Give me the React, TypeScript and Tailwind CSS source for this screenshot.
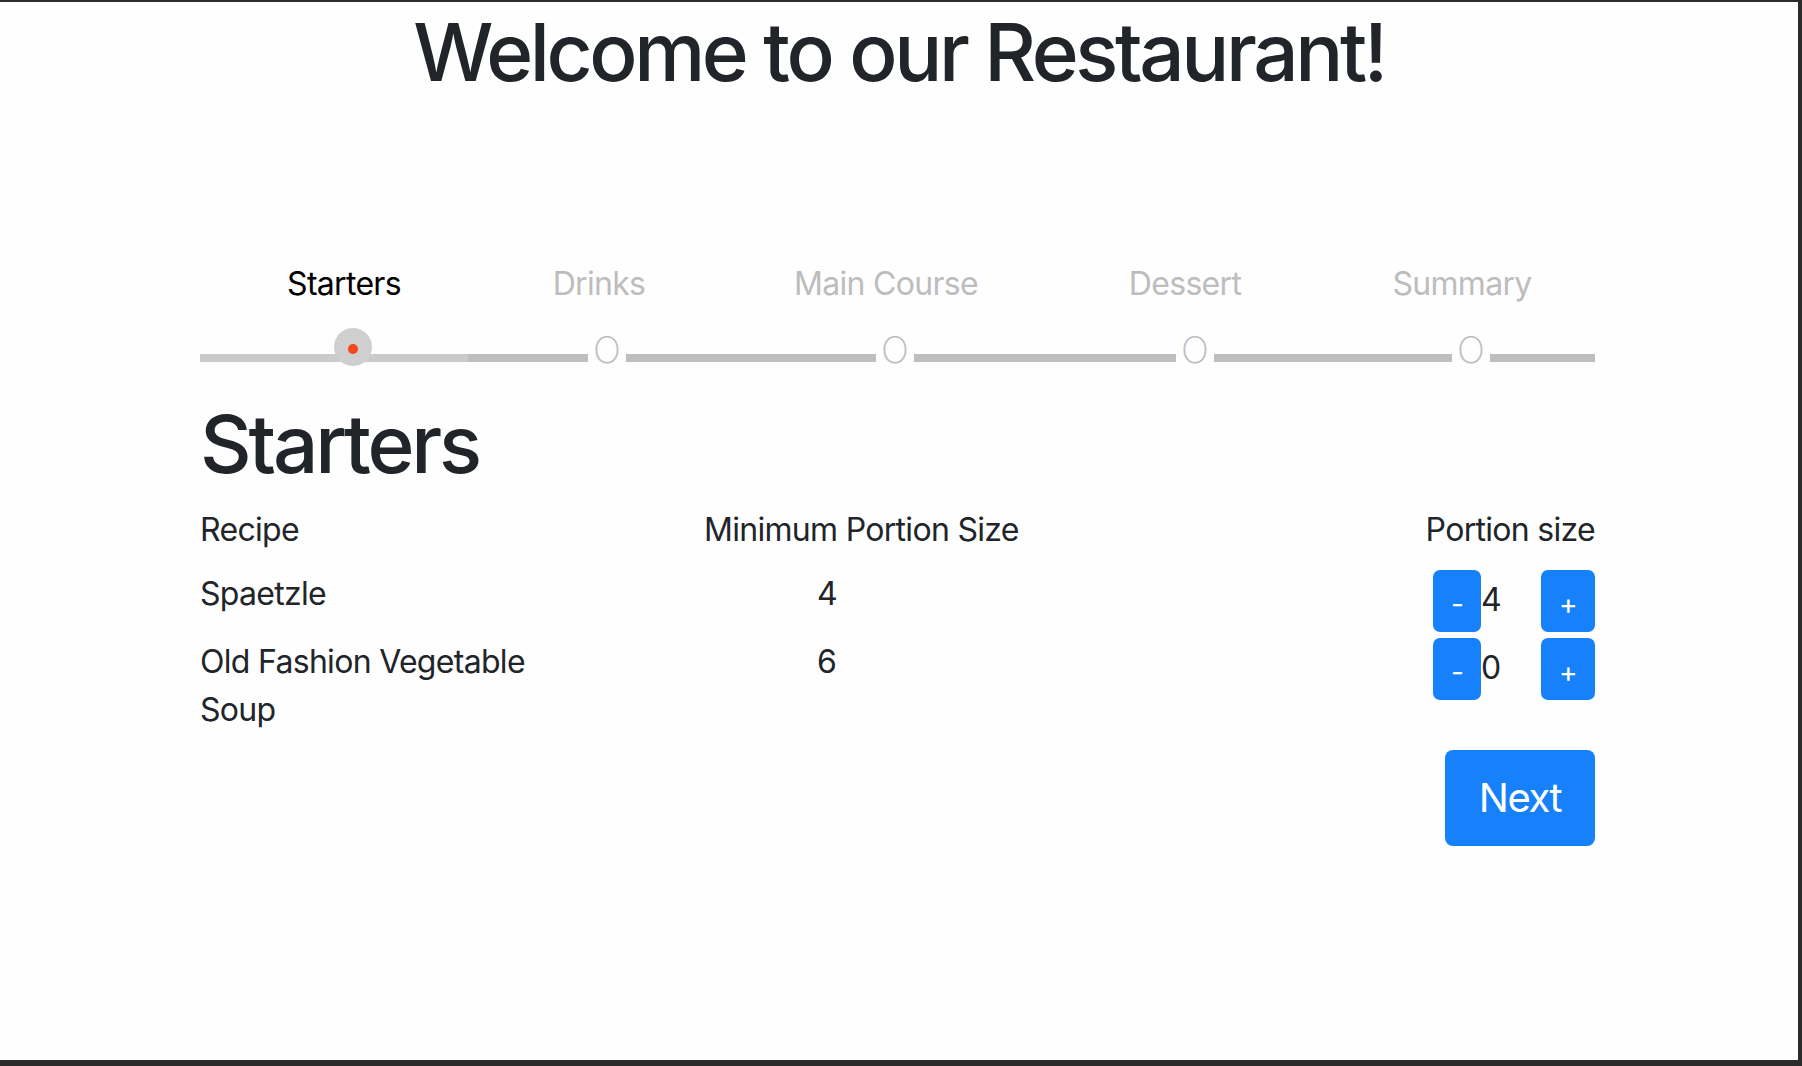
import { useState } from 'react'

const STEPS = [
  { label: 'Starters', cell: 'w-[288px]', active: true },
  { label: 'Drinks', cell: 'w-[222px]', active: false },
  { label: 'Main Course', cell: 'w-[352px]', active: false },
  { label: 'Dessert', cell: 'w-[246px]', active: false },
  { label: 'Summary', cell: 'w-[308px]', active: false },
]

const STARTERS = [
  { id: 1, name: 'Spaetzle', min: 4, initial: 4 },
  { id: 2, name: 'Old Fashion Vegetable Soup', min: 6, initial: 0 },
]

function StepMarker() {
  return (
    <div className="flex h-[40px] w-[38px] items-center justify-center text-[37px] font-extralight leading-none text-[#bdbdbd]">
      <span className="mt-[2px]">O</span>
    </div>
  )
}

function Stepper() {
  return (
    <div className="w-[1395px]">
      {/* labels */}
      <div className="flex h-[48px] items-center">
        {STEPS.map((s) => (
          <div
            key={s.label}
            className={`${s.cell} shrink-0 text-center text-[32px] leading-[48px] tracking-[-0.7px] ${s.active ? 'text-black' : 'text-[#bdbdbd]'}`}
          >
            {s.label}
          </div>
        ))}
      </div>

      {/* track */}
      <div className="mt-[20px] flex h-[40px] items-start">
        <div className="relative mt-[26px] h-[8px] w-[268px] bg-[#cbcbcb]">
          <div className="absolute left-[134px] top-[-26px] flex h-[38px] w-[38px] items-center justify-center rounded-full bg-[#cfcfcf]">
            <div className="mt-[3px] h-[10px] w-[10px] rounded-full bg-[#f5461a]" />
          </div>
        </div>
        <div className="mt-[26px] h-[8px] w-[120px] bg-[#bebebe]" />
        <StepMarker />
        <div className="mt-[26px] h-[8px] w-[250px] bg-[#bebebe]" />
        <StepMarker />
        <div className="mt-[26px] h-[8px] w-[262px] bg-[#bebebe]" />
        <StepMarker />
        <div className="mt-[26px] h-[8px] w-[238px] bg-[#bebebe]" />
        <StepMarker />
        <div className="mt-[26px] h-[8px] w-[105px] bg-[#bebebe]" />
      </div>
    </div>
  )
}

function PortionControl({ value, onChange }: { value: number; onChange: (v: number) => void }) {
  return (
    <div className="flex items-start">
      <button
        onClick={() => onChange(Math.max(0, value - 1))}
        className="flex h-[62px] w-[48px] items-center justify-center rounded-[7px] bg-[#1681fb] pt-[6px] text-[28px] text-white"
      >
        -
      </button>
      <div className="w-[60px] pt-[6px] text-[32px] leading-[48px]">{value}</div>
      <button
        onClick={() => onChange(value + 1)}
        className="flex h-[62px] w-[54px] items-center justify-center rounded-[7px] bg-[#1681fb] pt-[6px] text-[28px] text-white"
      >
        +
      </button>
    </div>
  )
}

export default function App() {
  const [portions, setPortions] = useState<Record<number, number>>(
    Object.fromEntries(STARTERS.map((s) => [s.id, s.initial]))
  )

  return (
    <div className="h-[1066px] w-[1802px] bg-[#2b2b2b] pt-[2px] pr-[4px] pb-[6px]" style={{ fontFamily: 'Inter, "Noto Sans", sans-serif' }}>
      <div className="h-full w-full bg-[#fefefe] text-[#212529]">
        <h1 className="pt-[2px] text-center text-[80px] font-medium leading-[96px] tracking-[-3.4px]">Welcome to our Restaurant!</h1>

        <div className="ml-[200px] mt-[160px] flex w-[1395px] flex-col">
          <Stepper />

          <h1 className="mt-[28px] text-[80px] font-medium leading-[96px] tracking-[-3.2px]">Starters</h1>

          {/* header */}
          <div className="mt-[14px] flex text-[32px] leading-[48px] tracking-[-0.7px]">
            <div className="w-[504px] shrink-0">Recipe</div>
            <div>Minimum Portion Size</div>
            <div className="flex-1" />
            <div>Portion size</div>
          </div>

          <div className="mt-[16px] flex flex-col gap-[6px]">
            {STARTERS.map((s) => (
              <div key={s.id} className="flex items-start text-[32px] leading-[48px] tracking-[-0.7px]">
                <div className="w-[504px] shrink-0">
                  <div className="w-[380px]">{s.name}</div>
                </div>
                <div className="pl-[113px]">{s.min}</div>
                <div className="flex-1" />
                <PortionControl
                  value={portions[s.id]}
                  onChange={(v) => setPortions((p) => ({ ...p, [s.id]: v }))}
                />
              </div>
            ))}
          </div>

          <button className="mt-[16px] h-[96px] w-[150px] self-end rounded-[8px] bg-[#1681fb] text-[40px] tracking-[-1.5px] text-white">
            Next
          </button>
        </div>
      </div>
    </div>
  )
}
